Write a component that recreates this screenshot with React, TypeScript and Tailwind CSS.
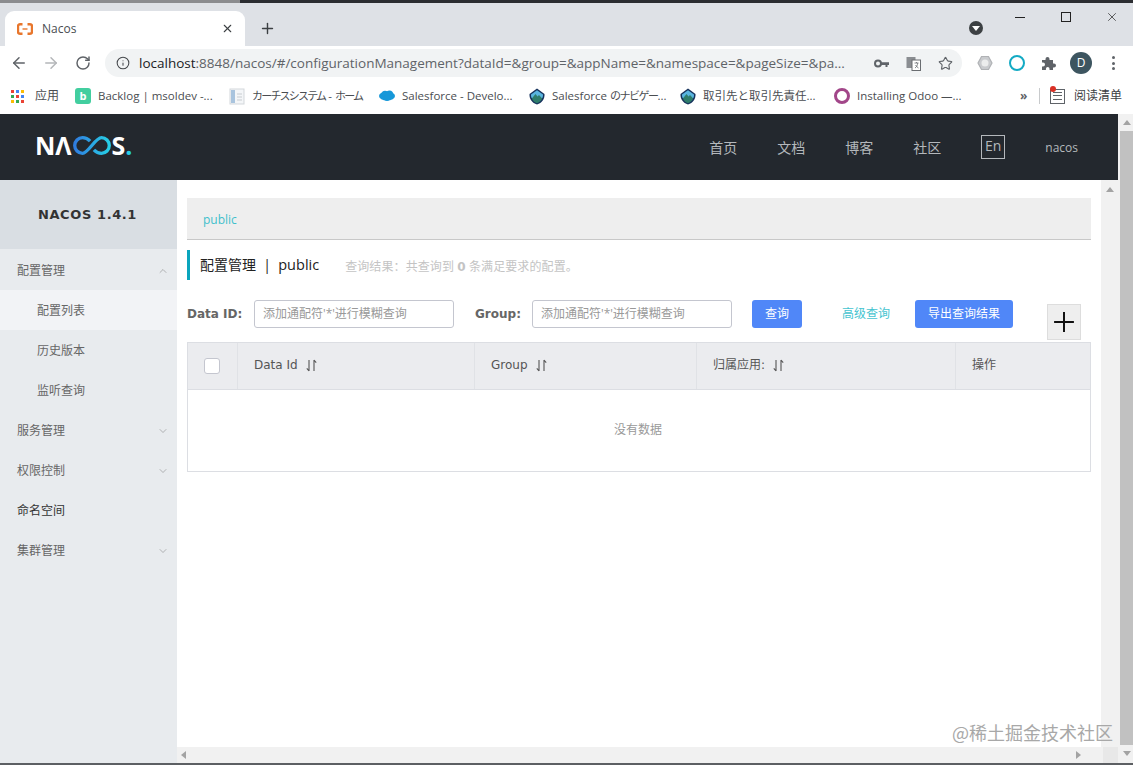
import React from 'react';
import { ArrowLeft, ArrowRight, ChevronDown, ChevronUp, Info, Plus, RotateCw, Star, X } from 'lucide-react';

const dejavu = "font-['DejaVu_Sans','Noto_Sans_CJK_SC',sans-serif]";

function Favicon() {
  return (
    <svg width="16" height="12" viewBox="0 0 16 12" fill="none" stroke="#e8762c" strokeWidth="2.4">
      <path d="M5.5 1.2H3a2 2 0 0 0-2 2v5.6a2 2 0 0 0 2 2h2.5" />
      <path d="M10.5 1.2H13a2 2 0 0 1 2 2v5.6a2 2 0 0 1-2 2h-2.5" />
      <path d="M5.5 6h5" strokeWidth="1.4" />
    </svg>
  );
}

function AppsIcon() {
  const colors = ['#ea4335', '#4285f4', '#fbbc04', '#34a853', '#ea4335', '#4285f4', '#fbbc04', '#34a853', '#ea4335'];
  return (
    <div className="grid grid-cols-3 gap-[2px] w-[13px]">
      {colors.map((c, i) => (
        <div key={i} className="w-[3px] h-[3px]" style={{ backgroundColor: c }} />
      ))}
    </div>
  );
}

function MountainIcon() {
  return (
    <svg width="16" height="17" viewBox="0 0 16 17">
      <path d="M8 .5 15.5 6c.4 5-2.5 9-7.5 10.5C3 15 .1 11 .5 6z" fill="#16325c" />
      <path d="M8 2.2 14 6.5c.1 1.300-.1 2.500-.6 3.600H2.600C2.100 9 1.900 7.800 2 6.500z" fill="#5ab5e0" />
      <path d="M2.800 10.500 6.500 6l2 2.500 1.500-1.500 3.200 3.500C12 13 10.200 14.500 8 15.200 5.600 14.500 3.800 12.800 2.800 10.500z" fill="#2e7d6b" />
    </svg>
  );
}

function SortIcon() {
  return (
    <svg width="11" height="13" viewBox="0 0 11 13" fill="none" stroke="#555" strokeWidth="1.100">
      <path d="M3 1v11M3 12 .8 9.400" />
      <path d="M8 12V1M8 1l2.200 2.600" />
    </svg>
  );
}

function Triangle({ dir }: { dir: 'up' | 'down' | 'left' | 'right' }) {
  const d = { up: 'M4 1 8 6H0z', down: 'M0 1h8L4 6z', left: 'M6 0v8L1 4z', right: 'M1 0v8l5-4z' }[dir];
  return (
    <svg width="8" height="8" viewBox="0 0 8 8" fill="#a3a3a3">
      <path d={d} />
    </svg>
  );
}

function Bookmark({ icon, label, className }: { icon: React.ReactNode; label: React.ReactNode; className: string }) {
  return (
    <div className={`flex items-center shrink-0 ${className}`}>
      <div className="w-[23px] shrink-0 flex">{icon}</div>
      <span className="text-[11.5px] text-[#4a4d51] whitespace-pre">{label}</span>
    </div>
  );
}

function ChromeBar() {
  return (
    <>
      <div className="flex h-[3px] shrink-0">
        <div className="w-[240px] bg-[#8b8c8f]" />
        <div className="flex-1 bg-[#2b2d31]" />
      </div>
      <div className="h-[43px] shrink-0 bg-[#dee1e6] flex items-end relative">
        <div className="ml-[5px] w-[240px] h-[35px] bg-white rounded-t-[9px] flex items-center pl-[12px]">
          <Favicon />
          <span className="ml-[9px] text-[12px] text-[#4a4d51]">Nacos</span>
          <X size={13} strokeWidth={2} className="ml-[145px] text-[#3c4043]" />
        </div>
        <Plus size={17} strokeWidth={2} className="ml-[14px] mb-[9px] text-[#3c4043]" />
        <div className="absolute left-[969px] top-[18px] w-[14px] h-[14px] rounded-full bg-[#3c4043] flex items-center justify-center">
          <div className="w-0 h-0 border-x-[4px] border-x-transparent border-t-[5px] border-t-white mt-[1px]" />
        </div>
        <div className="absolute left-[1015px] top-[14px] w-[10px] h-px bg-[#222]" />
        <div className="absolute left-[1061px] top-[9px] w-[10px] h-[10px] border border-[#222]" />
        <X size={14} strokeWidth={1.200} className="absolute left-[1105px] top-[7px] text-[#222]" />
      </div>
      <div className="h-[34px] shrink-0 bg-white flex items-center">
        <ArrowLeft size={18} strokeWidth={2} className="ml-[10px] text-[#5f6368]" />
        <ArrowRight size={18} strokeWidth={2} className="ml-[14px] text-[#b4b6b9]" />
        <RotateCw size={16} strokeWidth={2.200} className="ml-[15px] text-[#5f6368]" />
        <div className="ml-[14px] w-[857px] h-[28px] rounded-full bg-[#f1f3f4] flex items-center">
          <Info size={14} strokeWidth={1.800} className="ml-[11px] text-[#45484c] shrink-0" />
          <span className="ml-[9px] w-[716px] shrink-0 text-[13.5px] text-[#5f6368] whitespace-nowrap">
            <span className="text-[#202124]">localhost</span>:8848/nacos/#/configurationManagement?dataId=&amp;group=&amp;appName=&amp;namespace=&amp;pageSize=&amp;pa...
          </span>
          <svg width="15" height="9" viewBox="0 0 15 9" className="ml-[19px] shrink-0" fill="#5f6368">
            <circle cx="4" cy="4.500" r="3" fill="none" stroke="#5f6368" strokeWidth="2" />
            <path d="M7 3.200h8v2.800h-1.500v2h-2V6H7z" />
          </svg>
          <svg width="15" height="15" viewBox="0 0 15 15" className="ml-[17px] shrink-0">
            <rect x=".5" y="1" width="9" height="11" fill="#8a8d91" />
            <rect x="6" y="4" width="8.500" height="10.500" fill="#fff" stroke="#6a6d71" />
            <path d="M8.500 7h4M10.500 6v1M9 12c1.500-1 2.500-2.500 2.700-5M9.500 9c.8 1.300 1.800 2.300 3 3" fill="none" stroke="#6a6d71" strokeWidth=".8" />
          </svg>
          <Star size={15} strokeWidth={1.800} className="ml-[17px] text-[#5f6368] shrink-0" />
        </div>
        <svg width="16" height="16" viewBox="0 0 16 16" className="ml-[15px]">
          <path d="M4.500 1.500h7L15 8l-3.500 6.500h-7L1 8z" fill="#c9cbce" stroke="#b0b2b5" strokeWidth="1.200" />
          <circle cx="8" cy="8" r="3.500" fill="#eceded" />
        </svg>
        <div className="ml-[16px] w-[16px] h-[16px] rounded-full border-2 border-[#13aac4]" />
        <svg width="16" height="16" viewBox="0 0 16 16" className="ml-[16px]" fill="#5f6368">
          <path d="M1 5h3.500V4a2 2 0 0 1 4 0v1H12v3.500h1a2 2 0 0 1 0 4h-1V15H8.500v-1.200a1.800 1.800 0 0 0-3.600 0V15H1v-3.500h1a2 2 0 0 0 0-4H1z" />
        </svg>
        <div className="ml-[13px] w-[22px] h-[22px] rounded-full bg-[#3d5560] text-white text-[12px] flex items-center justify-center">D</div>
        <div className="ml-[20px] flex flex-col gap-[2.500px]">
          <div className="w-[3px] h-[3px] rounded-full bg-[#5f6368]" />
          <div className="w-[3px] h-[3px] rounded-full bg-[#5f6368]" />
          <div className="w-[3px] h-[3px] rounded-full bg-[#5f6368]" />
        </div>
      </div>
      <div className="h-[34px] shrink-0 bg-white flex items-center pl-[11px] pb-[2px]">
        <div className="w-[24px] shrink-0"><AppsIcon /></div>
        <span className="text-[12px] text-[#4a4d51] w-[40px] shrink-0">应用</span>
        <Bookmark
          className="w-[154px]"
          label="Backlog | msoldev -..."
          icon={<div className="w-[16px] h-[16px] rounded-[3px] bg-[#42ce9f] text-white text-[11px] font-bold leading-[16px] text-center">b</div>}
        />
        <Bookmark
          className="w-[150px]"
          label={
            <>
              <span className="text-[11px] tracking-[-1.800px]">カーチスシステム</span>
              {' - '}
              <span className="text-[11px] tracking-[-1.800px]">ホーム</span>
            </>
          }
          icon={
            <svg width="16" height="17" viewBox="0 0 16 17">
              <rect x="1" y="1" width="14" height="15" fill="#f4f6f8" stroke="#d3d7db" />
              <rect x="2" y="2" width="4" height="13" fill="#a9c4de" />
              <path d="M8 6h5M8 9h5M8 12h5" stroke="#c8ccd0" />
            </svg>
          }
        />
        <Bookmark
          className="w-[150px]"
          label="Salesforce - Develo..."
          icon={
            <svg width="16" height="12" viewBox="0 0 16 12" fill="#1798d9">
              <ellipse cx="8" cy="6" rx="8" ry="4.500" />
              <circle cx="6" cy="4" r="3.200" />
              <circle cx="10.500" cy="4" r="3.500" />
              <circle cx="8" cy="8" r="3" />
            </svg>
          }
        />
        <Bookmark
          className="w-[151px]"
          label={<>Salesforce <span className="text-[11px] tracking-[-1.500px]">のナビゲー</span>...</>}
          icon={<MountainIcon />}
        />
        <Bookmark className="w-[154px]" label="取引先と取引先責任..." icon={<MountainIcon />} />
        <Bookmark
          className="w-[186px]"
          label="Installing Odoo —..."
          icon={<div className="w-[16px] h-[16px] rounded-full border-[3px] border-[#a24689]" />}
        />
        <span className="w-[19px] shrink-0 text-[12px] font-bold text-[#5f6368] leading-none">»</span>
        <div className="w-px h-[16px] bg-[#c8cacc] shrink-0" />
        <div className="relative ml-[10px] w-[15px] h-[15px] border border-[#5f6368] shrink-0 flex flex-col justify-around px-[2px] py-[1px]">
          <div className="h-px bg-[#5f6368]" />
          <div className="h-px bg-[#5f6368]" />
          <div className="h-px bg-[#5f6368]" />
          <div className="absolute -left-[1px] -top-[4px] w-[6px] h-[6px] rounded-full bg-[#d93025]" />
        </div>
        <span className="ml-[9px] text-[12px] text-[#3c4043] whitespace-nowrap">阅读清单</span>
      </div>
    </>
  );
}

function SideItem({ label, sub, active, dark, open }: { label: string; sub?: boolean; active?: boolean; dark?: boolean; open?: 'up' | 'down' }) {
  return (
    <div className={`h-[40px] flex items-center justify-between pr-[8px] pt-[2px] text-[12px] ${sub ? 'pl-[37px]' : 'pl-[17px]'} ${active ? 'bg-[#f2f3f6]' : ''} ${dark ? 'text-[#333]' : 'text-[#666]'}`}>
      <span>{label}</span>
      {open === 'up' && <ChevronUp size={12} strokeWidth={1} className="text-[#777]" />}
      {open === 'down' && <ChevronDown size={12} strokeWidth={1} className="text-[#777]" />}
    </div>
  );
}

function Sidebar() {
  return (
    <div className="w-[177px] shrink-0 bg-[#e8ebee]">
      <div className={`h-[69px] bg-[#d9dee3] flex items-center justify-center pr-[2px] text-[13px] font-bold tracking-[0.6px] text-[#333] ${dejavu}`}>
        NACOS 1.4.1
      </div>
      <div className="pt-px">
        <SideItem label="配置管理" open="up" />
        <SideItem label="配置列表" sub active />
        <SideItem label="历史版本" sub />
        <SideItem label="监听查询" sub />
        <SideItem label="服务管理" open="down" />
        <SideItem label="权限控制" open="down" />
        <SideItem label="命名空间" dark />
        <SideItem label="集群管理" open="down" />
      </div>
    </div>
  );
}

function ConfigPage() {
  return (
    <div className="flex-1 bg-white pt-[18px] px-[10px] relative">
      <div className="h-[42px] bg-[#eeeeee] border-b border-[#c8c8c8] flex items-center pl-[16px] pt-[2px] text-[12px] text-[#3fc0cc]">
        public
      </div>
      <div className="mt-[10px] h-[30px] flex items-center border-l-[3px] border-[#0aa5bd] pl-[10px]">
        <span className="text-[14px] text-[#222] whitespace-pre">配置管理  |  <span className="text-[14.5px]">public</span></span>
        <span className="ml-[26px] pt-[3px] text-[12px] tracking-[0.1px] text-[#c4c4c4]">
          查询结果：共查询到 <b className={dejavu}>0</b> 条满足要求的配置。
        </span>
      </div>
      <div className="mt-[20px] h-[42px] flex items-start">
        <label className={`w-[67px] h-[28px] leading-[28px] text-[12px] font-bold text-[#666] ${dejavu}`}>Data ID:</label>
        <div className="w-[200px] h-[28px] border border-[#c4c6cf] rounded-[3px] pl-[8px] text-[12px] leading-[26px] text-[#999]">添加通配符'*'进行模糊查询</div>
        <label className={`ml-[21px] w-[57px] h-[28px] leading-[28px] text-[12px] font-bold text-[#666] ${dejavu}`}>Group:</label>
        <div className="w-[200px] h-[28px] border border-[#c4c6cf] rounded-[3px] pl-[8px] text-[12px] leading-[26px] text-[#999]">添加通配符'*'进行模糊查询</div>
        <button className="ml-[20px] w-[50px] h-[28px] bg-[#5087f8] rounded-[3px] text-[12px] text-white">查询</button>
        <span className="ml-[40px] w-[48px] h-[28px] leading-[28px] text-[12px] text-[#45c4d0] whitespace-nowrap">高级查询</span>
        <button className="ml-[25px] w-[98px] h-[28px] bg-[#5087f8] rounded-[3px] text-[12px] text-white">导出查询结果</button>
        <div className="ml-[34px] mt-[4px] w-[34px] h-[36px] bg-[#eeeeee] border border-[#dddddd] flex items-center justify-center">
          <Plus size={34} strokeWidth={1.400} strokeLinecap="butt" className="text-[#111] shrink-0" />
        </div>
      </div>
      <div className="border border-[#dcdee3]">
        <div className={`grid grid-cols-[49px_237px_222px_259px_1fr] h-[47px] bg-[#ebecef] border-b border-[#dcdee3] text-[12px] text-[#555] ${dejavu}`}>
          <div className="flex items-center pl-[16px]">
            <div className="w-[16px] h-[16px] bg-white border border-[#c4c6cf] rounded-[3px]" />
          </div>
          <div className="flex items-center gap-[8px] pl-[16px] pb-[2px] border-l border-[#e0e2e6]">Data Id <SortIcon /></div>
          <div className="flex items-center gap-[8px] pl-[16px] pb-[2px] border-l border-[#e0e2e6]">Group <SortIcon /></div>
          <div className="flex items-center gap-[8px] pl-[16px] pb-[2px] border-l border-[#e0e2e6]">归属应用: <SortIcon /></div>
          <div className="flex items-center pl-[16px] pb-[2px] border-l border-[#e0e2e6]">操作</div>
        </div>
        <div className="h-[81px] flex items-center justify-center pb-[2px] pr-[2px] text-[12px] text-[#999]">没有数据</div>
      </div>
      <div className="absolute left-[775px] top-[540px] text-[18px] leading-[24px] text-[#a8a8a8] whitespace-nowrap font-['Noto_Sans_CJK_SC',sans-serif]">
        @稀土掘金技术社区
      </div>
    </div>
  );
}

export default function App() {
  return (
    <div className="w-[1133px] h-[765px] overflow-hidden flex flex-col bg-white font-['Open_Sans','Noto_Sans_CJK_SC',sans-serif]">
      <ChromeBar />
      <div className="flex-1 min-h-0 flex">
        <div className="w-[1118px] flex flex-col">
          <div className="h-[66px] shrink-0 bg-[#23282e] flex items-center pl-[35px] pr-[40px]">
            <div className="flex items-center mb-[4px] text-[25px] leading-none font-bold text-white">
              <span>N</span>
              <span>Λ</span>
              <svg width="40" height="19" viewBox="0 0 42 20" fill="none" strokeWidth="3.500">
                <defs>
                  <linearGradient id="loop" x1="0" x2="1" y1="0" y2="0">
                    <stop offset="0" stopColor="#2f7de0" />
                    <stop offset="1" stopColor="#27cfe6" />
                  </linearGradient>
                </defs>
                <path d="M19 5.500C16.500 2.800 14 1.800 11 1.800a8.200 8.200 0 0 0 0 16.400c6 0 13.500-16.400 20-16.400a8.200 8.200 0 0 1 0 16.400c-3 0-5.500-1-8-3.700" stroke="url(#loop)" />
              </svg>
              <span>S</span>
              <span className="text-[#27cfe6]">.</span>
            </div>
            <div className="ml-auto flex items-center text-[14px] text-[#b4b8bc]">
              <span className="w-[68px]">首页</span>
              <span className="w-[68px]">文档</span>
              <span className="w-[68px]">博客</span>
              <span className="w-[68px]">社区</span>
              <span className="w-[24px] h-[24px] border border-[#b4b8bc] text-center leading-[20px]">En</span>
              <span className="ml-[40px] mt-[2px] text-[12px]">nacos</span>
            </div>
          </div>
          <div className="flex-1 min-h-0 flex">
            <Sidebar />
            <div className="flex-1 flex flex-col">
              <div className="flex-1 min-h-0 flex">
                <ConfigPage />
                <div className="w-[17px] shrink-0 bg-[#f1f1f1] flex justify-center pt-[6px]">
                  <Triangle dir="up" />
                </div>
              </div>
              <div className="h-[16px] shrink-0 bg-[#f1f1f1] flex items-center pl-[3px]">
                <Triangle dir="left" />
                <div className="ml-auto mr-[20px]"><Triangle dir="right" /></div>
                <div className="w-[15px] h-[16px] bg-[#e8e8e8]" />
              </div>
            </div>
          </div>
        </div>
        <div className="w-[15px] shrink-0 bg-[#f1f1f1] flex flex-col items-center pl-[2px]">
          <div className="h-[17px] flex items-center"><Triangle dir="up" /></div>
          <div className="w-[13px] flex-1 bg-[#c1c1c1]" />
          <div className="h-[18px] flex items-center"><Triangle dir="down" /></div>
        </div>
      </div>
      <div className="h-[2px] shrink-0 bg-[#5c5f63]" />
    </div>
  );
}
